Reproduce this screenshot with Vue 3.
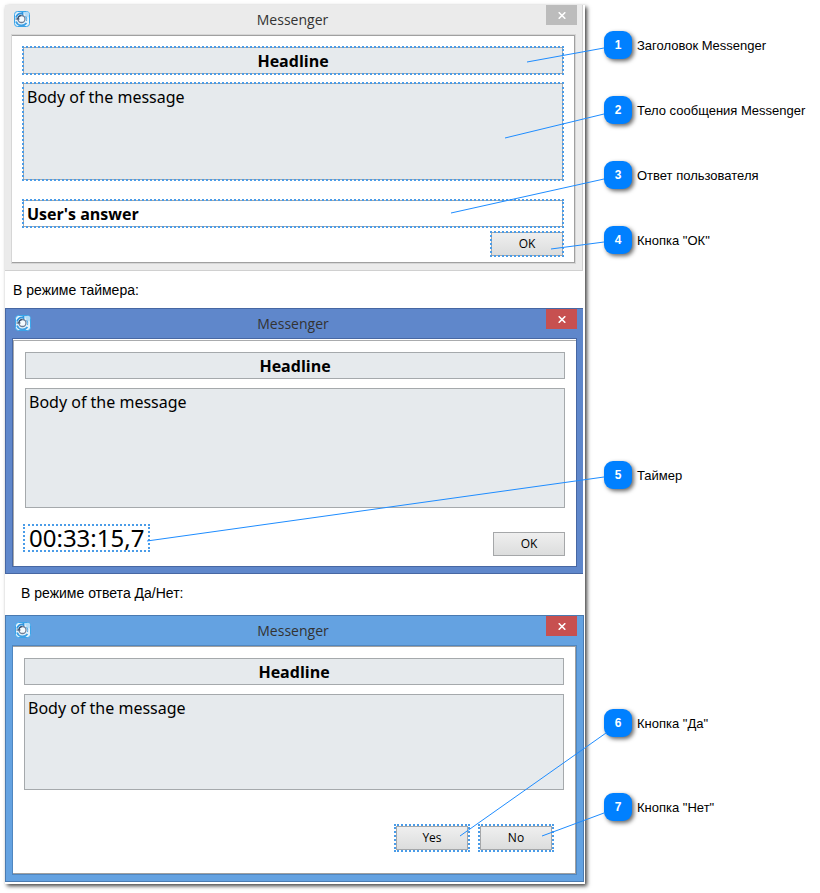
<template>
  <main class="page">
    <div class="sheet">
      <template v-for="win in windows" :key="win.id">
        <p v-if="win.caption" class="caption" :class="`caption--${win.id}`">{{ win.caption }}</p>

        <section class="window" :class="`window--${win.id}`" :aria-label="win.title">
          <!-- Title bar -->
          <header class="title-bar">
            <svg class="app-icon" viewBox="0 0 16 16" aria-hidden="true">
              <rect x="0.5" y="0.5" width="15" height="15" rx="3" fill="#e4f3fd" stroke="#3aa5ea" />
              <path d="M9.5 1h4q1.500 0 1.500 1.500v4q-3 0-5.500-5.500z" fill="#b5dcf6" />
              <path d="M2 10.500a6 6 0 0 0 10.500 1.500" fill="none" stroke="#3d9fe3" stroke-width="1.800" />
              <path d="M2 6.500a6 6 0 0 1 6.500-4M8.500 1v3.500" fill="none" stroke="#2f95df" stroke-width="1.800" />
              <circle cx="7.500" cy="8" r="3.500" fill="#f5fbff" stroke="#6f7f96" stroke-width="1.300" />
              <path d="M1.500 8h4M3.800 7.500a4 4 0 0 1 3-3.200" fill="none" stroke="#38506e" stroke-width="1.200" />
              <path d="M11.500 5a5 5 0 0 1 1 5" fill="none" stroke="#5aaee8" stroke-width="1.200" />
            </svg>
            <h1 class="window-title">{{ win.title }}</h1>
            <button class="close" type="button" aria-label="Close">
              <svg viewBox="0 0 8 7" aria-hidden="true">
                <path d="M0.700 0.300L7.300 6.700M7.300 0.300L0.700 6.700" />
              </svg>
            </button>
          </header>

          <!-- Client area -->
          <div class="client">
            <h2 class="headline" :class="{ marked: win.marked }">Headline</h2>
            <p class="message" :class="{ marked: win.marked }">Body of the message</p>
            <input
              v-if="win.answer"
              v-model="answer"
              class="answer marked"
              type="text"
              aria-label="User's answer"
            />
            <div class="footer">
              <time v-if="win.timer" class="timer">{{ win.timer }}</time>
              <div class="buttons">
                <button
                  v-for="label in win.buttons"
                  :key="label"
                  class="button"
                  type="button"
                >
                  {{ label }}
                </button>
              </div>
            </div>
          </div>
        </section>
      </template>
    </div>

    <!-- Numbered notes -->
    <aside class="notes">
      <ol v-for="group in noteGroups" :key="group.id" class="note-group" :class="`note-group--${group.id}`">
        <li v-for="note in group.notes" :key="note.number" class="note">
          <span class="badge">{{ note.number }}</span>
          <span class="note-label">{{ note.label }}</span>
        </li>
      </ol>
    </aside>

    <!-- Leader lines from the notes to the controls -->
    <svg class="leaders" width="820" height="893" aria-hidden="true">
      <line
        v-for="(line, i) in leaders"
        :key="i"
        :x1="line[0]"
        :y1="line[1]"
        :x2="line[2]"
        :y2="line[3]"
      />
    </svg>
  </main>
</template>

<script setup>
import { ref } from 'vue'

const answer = ref("User's answer")

const windows = [
  { id: 'answer', title: 'Messenger', marked: true, answer: true, buttons: ['OK'] },
  {
    id: 'timer',
    title: 'Messenger',
    caption: 'В режиме таймера:',
    timer: '00:33:15,7',
    buttons: ['OK']
  },
  {
    id: 'confirm',
    title: 'Messenger',
    caption: 'В режиме ответа Да/Нет:',
    buttons: ['Yes', 'No']
  }
]

const noteGroups = [
  {
    id: 'answer',
    notes: [
      { number: 1, label: 'Заголовок Messenger' },
      { number: 2, label: 'Тело сообщения Messenger' },
      { number: 3, label: 'Ответ пользователя' },
      { number: 4, label: 'Кнопка "ОК"' }
    ]
  },
  { id: 'timer', notes: [{ number: 5, label: 'Таймер' }] },
  {
    id: 'confirm',
    notes: [
      { number: 6, label: 'Кнопка "Да"' },
      { number: 7, label: 'Кнопка "Нет"' }
    ]
  }
]

// x1, y1, x2, y2
const leaders = [
  [527, 62, 604, 48],
  [505, 138, 604, 114],
  [451, 213, 604, 179],
  [551, 249, 604, 242],
  [147, 541, 604, 477],
  [460, 836, 606, 733],
  [542, 836, 604, 813]
]
</script>

<style>
body {
  background: #ffffff;
}
</style>

<style scoped>
.page {
  position: relative;
  display: grid;
  grid-template-columns: minmax(0, 1fr) 235px;
  align-items: start;
  padding: 5px 0 9px 5px;
  font-family: "Liberation Sans", Arial, sans-serif;
  color: #000000;
}

.page *,
.page *::before {
  box-sizing: border-box;
}

.sheet {
  padding-bottom: 2px;
  background: #ffffff;
  box-shadow: 2px 2px 4px rgba(0, 0, 0, 0.75);
}

.caption {
  display: flex;
  align-items: center;
  margin: 0;
  padding-left: 8px;
  height: 37px;
  font-size: 14px;
}

.caption--confirm {
  padding: 0 0 3px 16px;
  height: 41px;
}

/* Windows */
.window {
  margin-right: 2px;
  padding: 0 6px 6px;
  font-family: "Open Sans", "Segoe UI", sans-serif;
}

.window--answer {
  background: #ebebeb;
  border-right: 1px solid #d0d0d0;
  border-bottom: 1px solid #d0d0d0;
}

.window--timer {
  background: #5f87cb;
  border: 1px solid #4767a3;
  border-right: none;
}

.window--confirm {
  margin-right: 1px;
  background: #64a2e1;
  border: 1px solid #4a7ab0;
}

.title-bar {
  display: grid;
  grid-template-columns: 28px 1fr 31px;
  align-items: start;
  height: 29px;
}

.app-icon {
  width: 16px;
  height: 16px;
  margin: 6px 0 0 3px;
}

.window-title {
  margin: 0;
  font-size: 14px;
  font-weight: 400;
  line-height: 29px;
  text-align: center;
  color: #333333;
}

.close {
  display: flex;
  align-items: center;
  justify-content: center;
  width: 31px;
  height: 20px;
  padding: 0;
  border: none;
  background: #c75050;
}

.close svg {
  width: 8px;
  height: 7px;
}

.close path {
  fill: none;
  stroke: #ffffff;
  stroke-width: 1.600;
}

.window--answer .close {
  background: #bcbcbc;
}

.window--answer .title-bar {
  margin-right: -1px;
}

.client {
  padding: 12px 12px 7px 11px;
  border: 1px solid #d6d6d6;
  background: #ffffff;
  box-shadow: inset -1px -1px 0 #a0a0a0, inset 0 1px 0 #a0a0a0;
}

.window--timer .client {
  padding: 13px 11px 10px 12px;
  border-color: #4767a3;
  box-shadow: inset 0 1px 0 #ffffff, inset 1px 2px 0 #a9abad;
}

.window--confirm .client {
  padding-bottom: 24px;
  border-color: #4f86c0;
  box-shadow: inset -1px -1px 0 #a0a0a0, inset 0 1px 0 #a0a0a0;
}

.headline,
.message,
.answer {
  margin: 0;
  border: 1px solid #a5a9ac;
  background: #e6eaed;
  font-size: 16px;
  color: #000000;
}

.headline {
  height: 27px;
  font-weight: 700;
  line-height: 26px;
  text-align: center;
}

.message {
  height: 97px;
  margin-top: 9px;
  padding: 1px 3px;
  font-family: "Noto Sans", "Segoe UI", sans-serif;
  line-height: 24px;
}

.window--timer .message {
  height: 120px;
}

.window--confirm .message {
  height: 96px;
}

.answer {
  display: block;
  width: 100%;
  height: 27px;
  margin-top: 20px;
  padding: 0 3px;
  background: #ffffff;
  font-family: inherit;
  font-weight: 700;
}

/* Dotted highlight round an annotated control */
.marked,
.window--answer .button {
  outline: 2px dotted #4a9ce8;
  outline-offset: -1px;
}

.window--confirm .button {
  outline: 2px dotted #4a9ce8;
}

.footer {
  display: flex;
  justify-content: space-between;
  height: 24px;
  margin-top: 5px;
}

.window--timer .footer {
  align-items: center;
  margin-top: 24px;
}

.window--confirm .footer {
  margin-top: 36px;
  padding-right: 12px;
}

.timer {
  height: 28px;
  margin: -12px 0 0 -2px;
  padding: 0 4px;
  border: 2px dotted #4a9ce8;
  font-family: "Noto Sans", "Segoe UI", sans-serif;
  font-size: 24px;
  line-height: 24px;
}

.buttons {
  display: flex;
  gap: 12px;
  margin-left: auto;
}

.button {
  width: 72px;
  height: 24px;
  padding: 0 0 2px;
  border: 1px solid #a5a7a9;
  background: linear-gradient(#efefef, #dcdddd);
  font-family: inherit;
  font-size: 12px;
  color: #000000;
}

/* Notes */
.notes {
  padding: 26px 0 0 19px;
}

.note-group {
  display: flex;
  flex-direction: column;
  gap: 37px;
  margin: 0;
  padding: 0;
  list-style: none;
}

.note-group--timer {
  margin-top: 207px;
}

.note-group--confirm {
  gap: 56px;
  margin-top: 220px;
}

.note {
  display: flex;
  align-items: center;
  gap: 5px;
  height: 28px;
}

.badge {
  width: 28px;
  height: 28px;
  border-radius: 9px;
  background: #0080ff;
  box-shadow: 2px 2px 4px rgba(0, 0, 0, 0.6);
  font-size: 12px;
  font-weight: 700;
  line-height: 28px;
  text-align: center;
  color: #ffffff;
}

.note-label {
  font-size: 13px;
  white-space: nowrap;
}

.leaders {
  position: absolute;
  top: 0;
  right: 0;
  pointer-events: none;
}

.leaders line {
  stroke: #1e8cff;
  stroke-width: 1;
}
</style>
